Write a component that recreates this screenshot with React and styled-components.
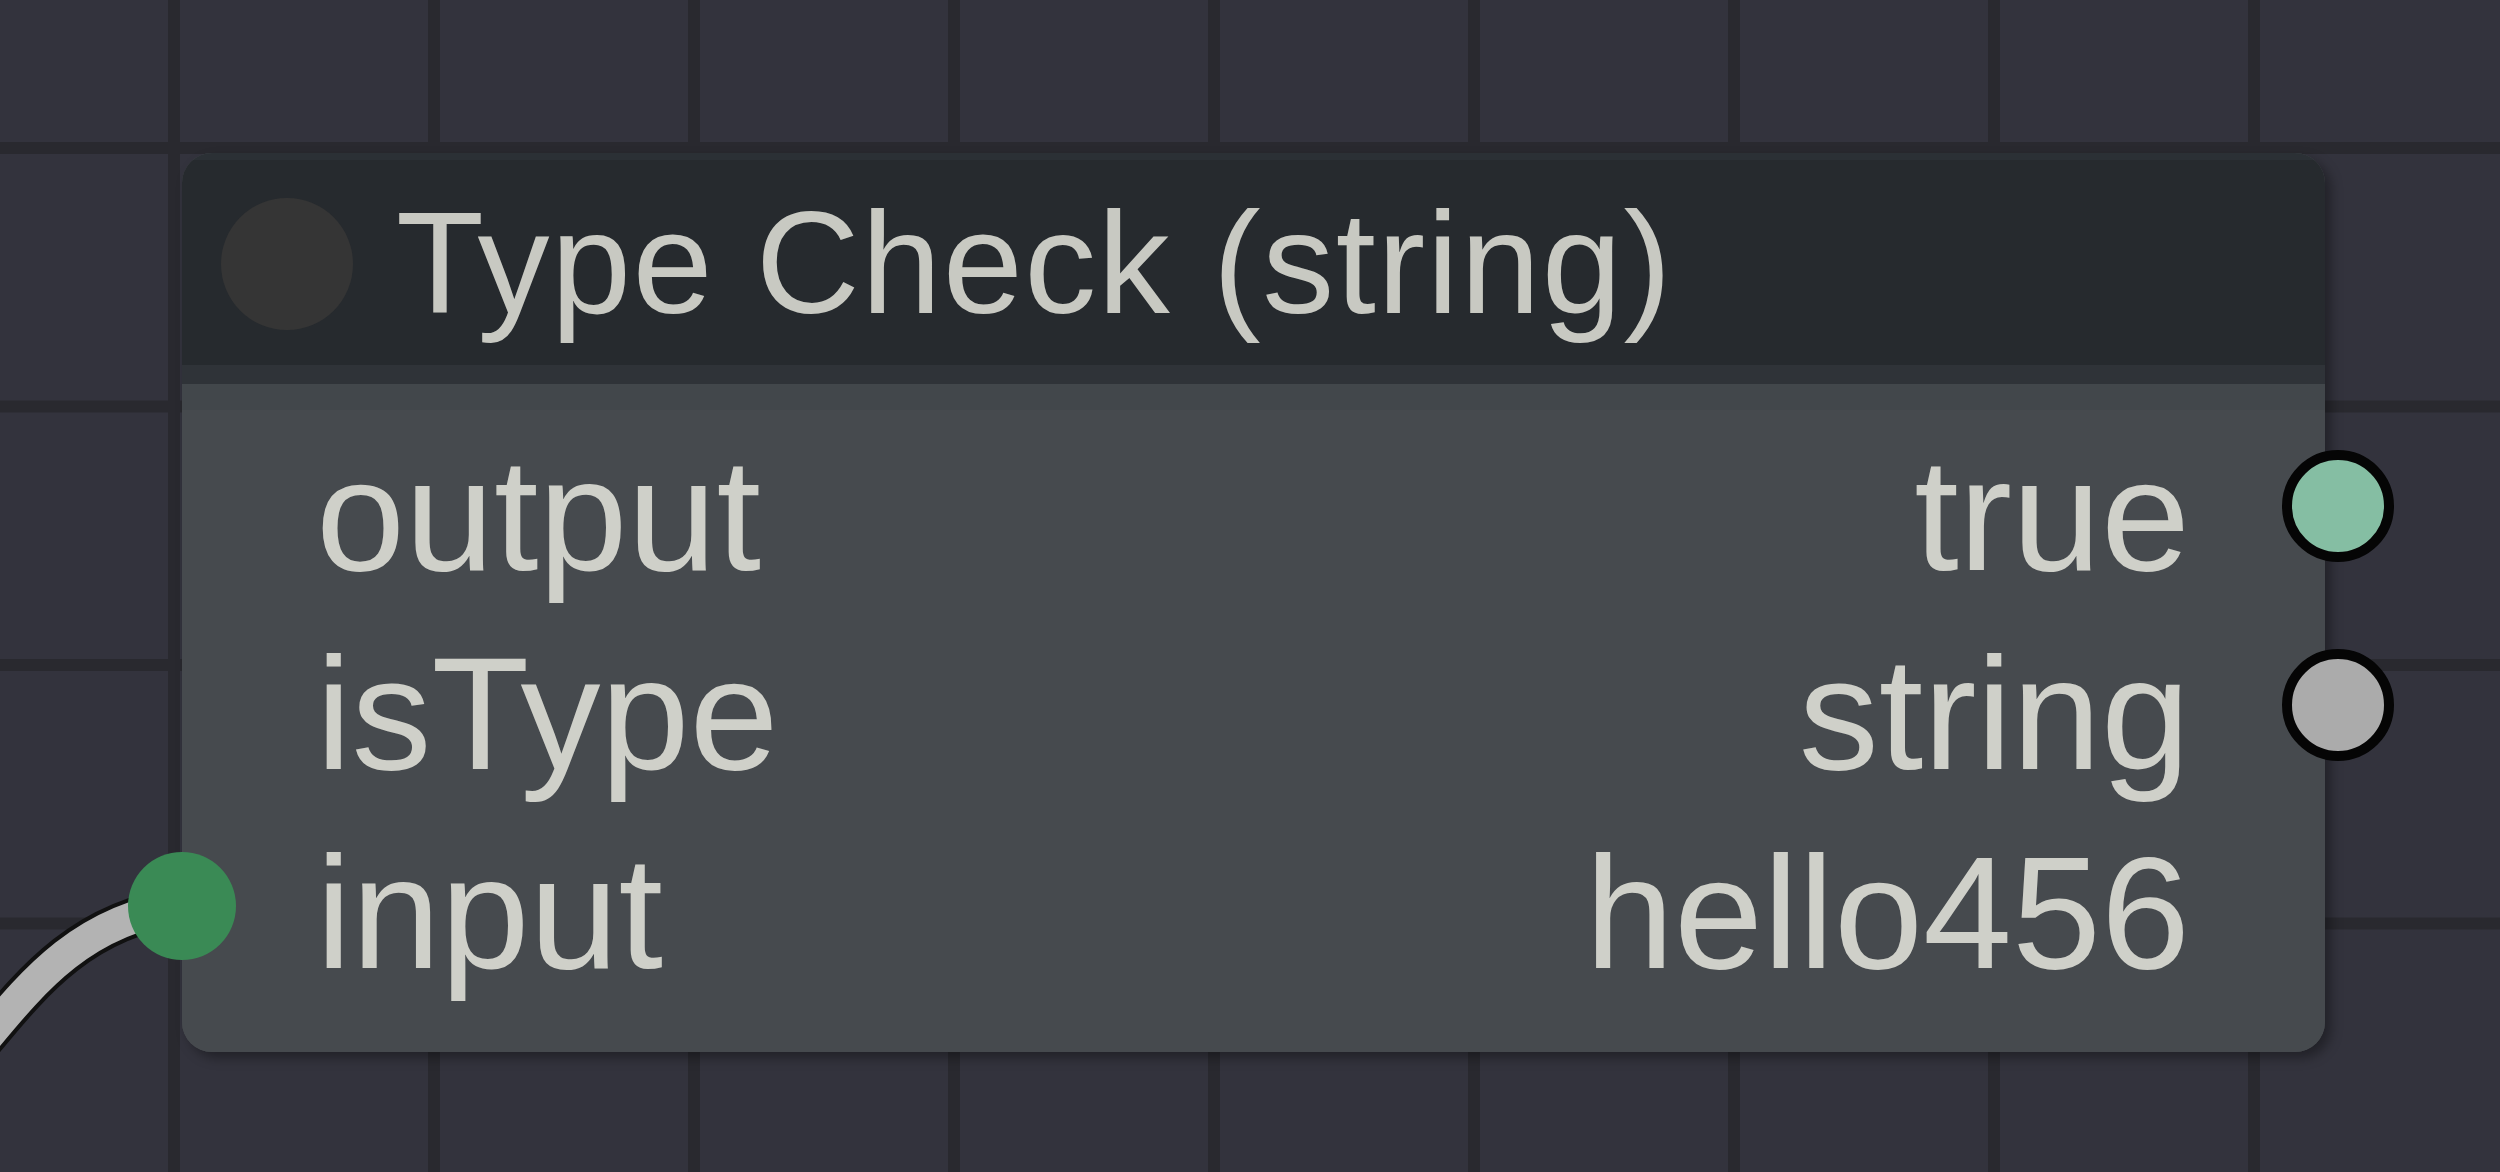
import React from 'react';
import styled, { createGlobalStyle } from 'styled-components';

const GlobalStyle = createGlobalStyle`
    html, body {
        margin: 0;
        padding: 0;
        background: #33333d;
    }
`;

const Canvas = styled.div`
    position: relative;
    width: 2500px;
    height: 1172px;
    overflow: hidden;
    background-color: #33333d;
    background-image:
        linear-gradient(to right, #29292f 0 12px, transparent 12px),
        linear-gradient(to bottom, #29292f 0 12px, transparent 12px);
    background-size: 260px 258.5px;
    background-position: 168px 142px;
    font-family: "Liberation Sans", Arial, sans-serif;
`;

const Link = styled.svg`
    position: absolute;
    left: 0;
    top: 0;
    width: 400px;
    height: 1172px;
    overflow: visible;
`;

const Node = styled.div`
    position: absolute;
    left: 182px;
    top: 153px;
    width: 2143px;
    height: 899px;
    display: flex;
    flex-direction: column;
    border-radius: 30px;
    background: #464a4e;
    box-shadow: 6px 6px 12px rgba(0, 0, 0, 0.35);
`;

const Header = styled.div`
    box-sizing: border-box;
    height: 231px;
    padding: 10px 0 0 39px;
    display: flex;
    align-items: center;
    gap: 43px;
    background: linear-gradient(#2b3035 0 7px, #262a2e 7px);
    border-bottom: 19px solid #2f3338;
    border-radius: 30px 30px 0 0;
`;

const Dot = styled.span`
    width: 132px;
    height: 132px;
    border-radius: 50%;
    background: #353535;
    flex: none;
`;

const Title = styled.span`
    font-size: 144px;
    line-height: 144px;
    letter-spacing: 1.5px;
    color: #c8c9c2;
    white-space: nowrap;
`;

const Body = styled.div`
    flex: 1;
    padding: 31px 135px 40px 134px;
    background: linear-gradient(#42474b 0 26px, #464a4e 26px);
    border-radius: 0 0 30px 30px;
`;

const Row = styled.div`
    position: relative;
    display: flex;
    justify-content: space-between;
    height: 199px;
    font-size: 160px;
    line-height: 199px;
    color: #cfd0c9;
    white-space: nowrap;
`;

const Socket = styled.span`
    position: absolute;
    box-sizing: border-box;
    border-radius: 50%;
    ${({ side }) => side === 'out'
        ? `right: -204px; top: 35px; width: 112px; height: 112px; border: 10px solid #050505;`
        : `left: -188px; top: 39px; width: 108px; height: 108px;`}
    background: ${({ color }) => color};
`;

const rows = [
    { label: 'output', value: 'true', socket: { side: 'out', color: '#85bea3' } },
    { label: 'isType', value: 'string', socket: { side: 'out', color: '#ababab' } },
    { label: 'input', value: 'hello456', socket: { side: 'in', color: '#3a8a55' } },
];

export default function App() {
    return (
        <>
            <GlobalStyle />
            <Canvas>
                <Link viewBox="0 0 400 1172">
                    <path d="M -20 1045 C 30 985, 80 920, 181 906" fill="none" stroke="#111" strokeWidth="40" />
                    <path d="M -20 1045 C 30 985, 80 920, 181 906" fill="none" stroke="#b3b3b3" strokeWidth="32" />
                </Link>
                <Node>
                    <Header>
                        <Dot />
                        <Title>Type Check (string)</Title>
                    </Header>
                    <Body>
                        {rows.map((r) => (
                            <Row key={r.label}>
                                <span>{r.label}</span>
                                <span>{r.value}</span>
                                <Socket side={r.socket.side} color={r.socket.color} />
                            </Row>
                        ))}
                    </Body>
                </Node>
            </Canvas>
        </>
    );
}
